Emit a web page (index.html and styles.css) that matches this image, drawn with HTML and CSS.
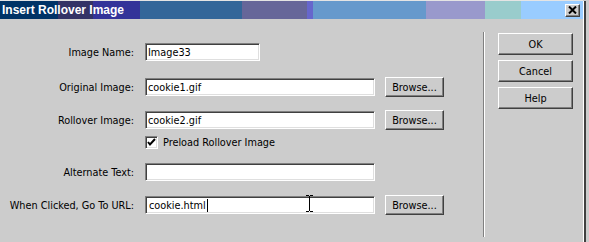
FILE: index.html
```html
<!DOCTYPE html>
<html lang="en">
<head>
  <meta charset="UTF-8" />
  <title>Insert Rollover Image</title>
  <link rel="stylesheet" href="styles.css">
</head>
<body>
  <div class="dialog">
    <div class="titlebar">
      <span class="title">Insert Rollover Image</span>
      <button class="close" type="button">
        <svg width="9" height="8" viewBox="0 0 9 8">
          <path d="M1 0.5 L8 7.5 M8 0.5 L1 7.5" stroke="#000" stroke-width="2"/>
        </svg>
      </button>
    </div>

    <div class="content">
      <form class="fields">
        <div class="row row-first">
          <label class="lbl" for="imgname">Image Name:</label>
          <input class="txt short" type="text" id="imgname" value="Image33">
        </div>

        <div class="row row-second">
          <label class="lbl" for="orig">Original Image:</label>
          <input class="txt" type="text" id="orig" value="cookie1.gif">
          <button class="btn browse" type="button">Browse...</button>
        </div>

        <div class="row">
          <label class="lbl" for="roll">Rollover Image:</label>
          <input class="txt" type="text" id="roll" value="cookie2.gif">
          <button class="btn browse" type="button">Browse...</button>
        </div>

        <div class="check-row">
          <span class="check">
            <svg width="9" height="9" viewBox="0 0 9 9">
              <path d="M1 4 L3 6.5 L8 1" stroke="#000" stroke-width="2" fill="none"/>
            </svg>
          </span>
          <span class="check-text">Preload Rollover Image</span>
        </div>

        <div class="row">
          <label class="lbl" for="alt">Alternate Text:</label>
          <input class="txt" type="text" id="alt" value="">
        </div>

        <div class="row">
          <label class="lbl" for="url">When Clicked, Go To URL:</label>
          <div class="txt url">cookie.html<span class="caret"></span></div>
          <button class="btn browse" type="button">Browse...</button>
        </div>
      </form>

      <div class="divider"></div>

      <div class="actions">
        <button class="btn action" type="button">OK</button>
        <button class="btn action" type="button">Cancel</button>
        <button class="btn action" type="button">Help</button>
      </div>
    </div>
  </div>

  <!-- mouse pointer over the URL field -->
  <svg class="ibeam" width="7" height="17" viewBox="0 0 7 17">
    <path d="M0 0.5 H3 M4 0.5 H7 M3.5 1 V16 M0 16.5 H3 M4 16.5 H7" stroke="#000" stroke-width="1"/>
  </svg>
</body>
</html>
```

FILE: styles.css
```css
body {
  margin: 0;
  width: 589px;
  height: 242px;
  overflow: hidden;
  background: #cccccc;
  font-family: "DejaVu Sans Condensed", "DejaVu Sans", sans-serif;
  font-stretch: condensed;
  font-size: 10.8px;
  color: #000;
  position: relative;
}
.dialog {
  width: 583px;
  height: 242px;
  border-right: 1px solid #ffffff;
  box-shadow: 2px 0 0 #404040;
}
.titlebar {
  margin-top: 1px;
  height: 18px;
  display: flex;
  align-items: center;
  justify-content: space-between;
  background: linear-gradient(to right,
    #003366 0 58px, #333366 58px 93px, #333399 93px 140px,
    #336699 140px 242px, #666699 242px 307px, #6666cc 307px 313px,
    #6699cc 313px 426px, #9999cc 426px 485px, #99cccc 485px 521px,
    #99ccff 521px 583px);
  box-shadow: 0 -1px 0 #e4e4e4;
}
.title {
  padding-left: 2px;
  color: #fff;
  font-family: "Liberation Sans", Arial, sans-serif;
  font-stretch: normal;
  font-weight: bold;
  font-size: 12px;
}
.close {
  width: 15px;
  height: 13px;
  margin-right: 3px;
  padding: 0;
  display: flex;
  align-items: center;
  justify-content: center;
  background: #cccccc;
  border: 1px solid;
  border-color: #ffffff #404040 #404040 #ffffff;
  box-shadow: inset -1px -1px #808080;
}
.content {
  display: flex;
}
.fields {
  width: 483px;
  margin: 0;
}
.row {
  display: flex;
  align-items: center;
  height: 20px;
  margin-top: 13px;
}
.row-first {
  margin-top: 23px;
}
.row-second {
  margin-top: 15px;
}
.lbl {
  flex: none;
  width: 145px;
  padding-right: 11px;
  box-sizing: border-box;
  text-align: right;
  white-space: nowrap;
}
.txt {
  flex: none;
  box-sizing: border-box;
  width: 230px;
  height: 18px;
  margin: 0;
  padding: 0 2px;
  font: inherit;
  color: #000;
  background: #fff;
  border: 1px solid;
  border-color: #808080 #ffffff #ffffff #808080;
  box-shadow: inset 1px 1px #404040, inset -1px -1px #dfdfdf;
  outline: none;
}
.short {
  width: 115px;
}
.url {
  display: flex;
  align-items: center;
  padding-left: 3px;
}
.caret {
  display: inline-block;
  width: 1px;
  height: 13px;
  margin-left: 1px;
  background: #000;
}
.btn {
  box-sizing: border-box;
  padding: 0;
  font: inherit;
  color: #000;
  background: #cccccc;
  border: 1px solid;
  border-color: #ffffff #404040 #404040 #ffffff;
  box-shadow: inset -1px -1px #808080;
}
.browse {
  flex: none;
  width: 59px;
  height: 20px;
  margin-left: 10px;
}
.check-row {
  display: flex;
  align-items: center;
  height: 13px;
  margin-top: 6px;
  padding-left: 145px;
}
.check {
  box-sizing: border-box;
  width: 13px;
  height: 13px;
  display: flex;
  align-items: center;
  justify-content: center;
  background: #fff;
  border: 1px solid;
  border-color: #808080 #ffffff #ffffff #808080;
  box-shadow: inset 1px 1px #404040, inset -1px -1px #dfdfdf;
}
.check-text {
  margin-left: 5px;
}
.divider {
  width: 1px;
  height: 205px;
  margin-top: 13px;
  background: #808080;
  border-right: 1px solid #ffffff;
}
.actions {
  display: flex;
  flex-direction: column;
  gap: 5px;
  margin-top: 14px;
  margin-left: 13px;
}
.action {
  width: 75px;
  height: 22px;
}
.ibeam {
  position: absolute;
  left: 306px;
  top: 195px;
}
```
